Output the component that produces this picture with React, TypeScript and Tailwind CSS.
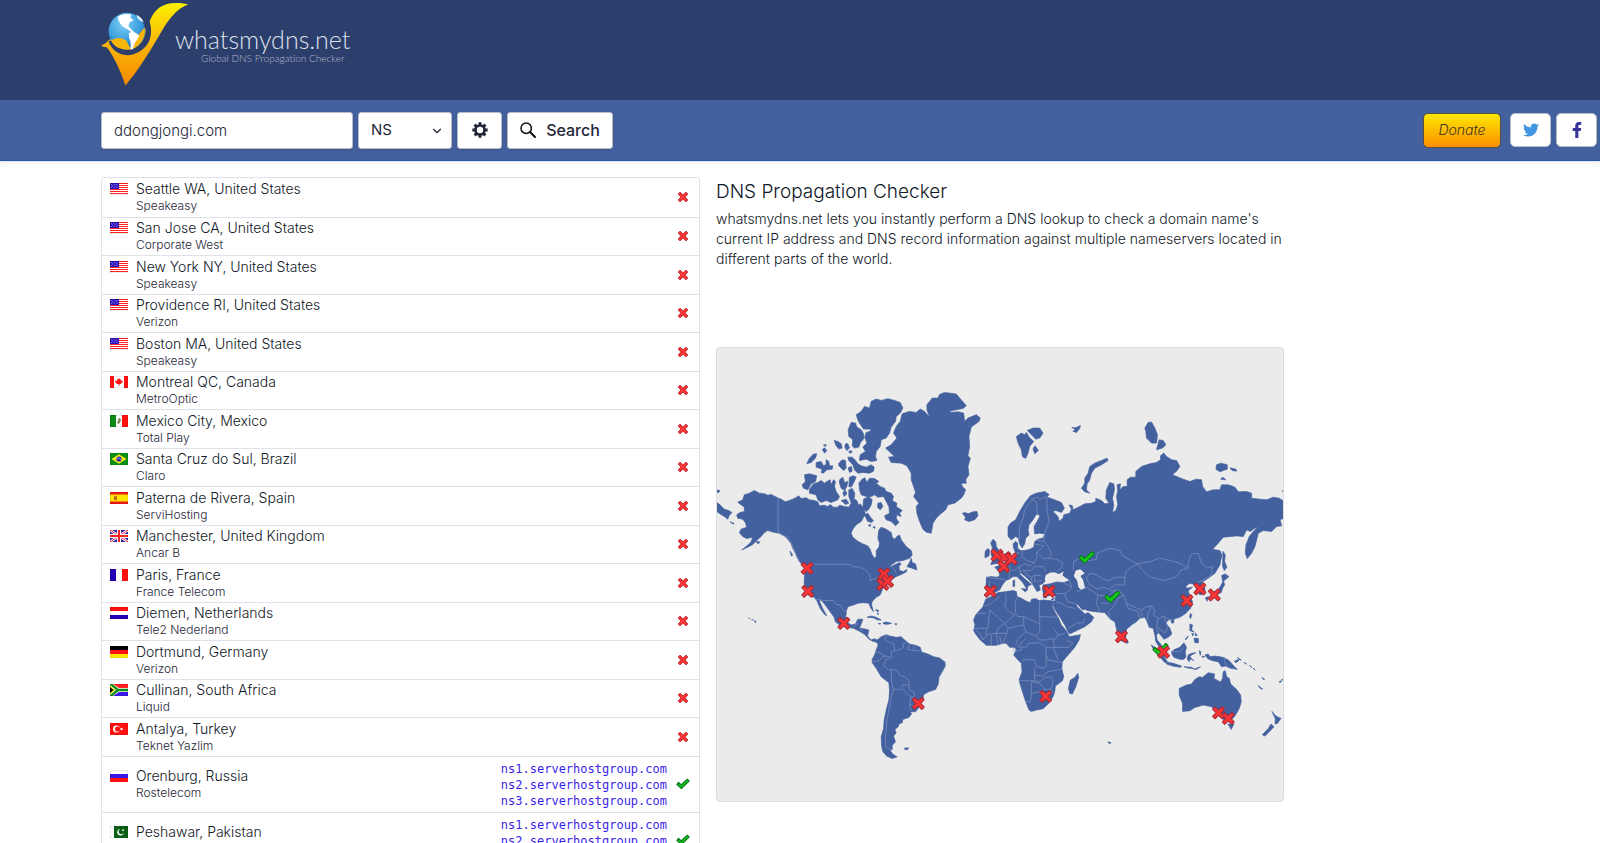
import React from 'react';
import { FaTwitter, FaFacebookF } from 'react-icons/fa';
import { ChevronDown } from 'lucide-react';

type Country =
  | 'us' | 'ca' | 'mx' | 'br' | 'es' | 'gb' | 'fr' | 'nl' | 'de' | 'za' | 'tr' | 'ru' | 'pk';

interface Server {
  country: Country;
  location: string;
  provider: string;
  records?: string[];
}

const NAMESERVERS = [
  'ns1.serverhostgroup.com',
  'ns2.serverhostgroup.com',
  'ns3.serverhostgroup.com',
];

const SERVERS: Server[] = [
  { country: 'us', location: 'Seattle WA, United States', provider: 'Speakeasy' },
  { country: 'us', location: 'San Jose CA, United States', provider: 'Corporate West' },
  { country: 'us', location: 'New York NY, United States', provider: 'Speakeasy' },
  { country: 'us', location: 'Providence RI, United States', provider: 'Verizon' },
  { country: 'us', location: 'Boston MA, United States', provider: 'Speakeasy' },
  { country: 'ca', location: 'Montreal QC, Canada', provider: 'MetroOptic' },
  { country: 'mx', location: 'Mexico City, Mexico', provider: 'Total Play' },
  { country: 'br', location: 'Santa Cruz do Sul, Brazil', provider: 'Claro' },
  { country: 'es', location: 'Paterna de Rivera, Spain', provider: 'ServiHosting' },
  { country: 'gb', location: 'Manchester, United Kingdom', provider: 'Ancar B' },
  { country: 'fr', location: 'Paris, France', provider: 'France Telecom' },
  { country: 'nl', location: 'Diemen, Netherlands', provider: 'Tele2 Nederland' },
  { country: 'de', location: 'Dortmund, Germany', provider: 'Verizon' },
  { country: 'za', location: 'Cullinan, South Africa', provider: 'Liquid' },
  { country: 'tr', location: 'Antalya, Turkey', provider: 'Teknet Yazlim' },
  { country: 'ru', location: 'Orenburg, Russia', provider: 'Rostelecom', records: NAMESERVERS },
  { country: 'pk', location: 'Peshawar, Pakistan', provider: 'PTCL', records: NAMESERVERS },
];

function FlagArt({ country }: { country: Country }) {
  switch (country) {
    case 'us':
      return (
        <>
          <path fill="#fff" d="M0 0h18v12H0z" />
          <path stroke="#f22" strokeWidth="1" d="M0 .5h18M0 2.5h18M0 4.5h18M0 6.5h18M0 8.5h18M0 10.5h18" />
          <path fill="#2a10b8" d="M0 0h9v6H0z" />
          <path stroke="#a9a0ee" strokeWidth=".8" strokeDasharray="1 1.6" d="M1 1.6h7M2 3h6M1 4.4h7" />
        </>
      );
    case 'ca':
      return (
        <>
          <path fill="#fff" d="M0 0h18v12H0z" />
          <path fill="#f11" d="M0 0h4v12H0zM14 0h4v12h-4zM9 2l1 1.6 1-.4-.2 2 1.6-.8.6 1.2-2.4 2.4H9.4V10h-.8V8H7L4.900 5.600l.7-1.200 1.600.8L7 3.200l1 .4z" />
        </>
      );
    case 'mx':
      return (
        <>
          <path fill="#fff" d="M0 0h18v12H0z" />
          <path fill="#0a8a17" d="M0 0h6v12H0z" />
          <path fill="#f11" d="M12 0h6v12h-6z" />
          <path fill="#7d8a5a" d="M8 4l2-1 1 2-1 3-2 1-1-2 1-1z" />
        </>
      );
    case 'br':
      return (
        <>
          <path fill="#0a8f16" d="M0 0h18v12H0z" />
          <path fill="#f7ea18" d="M9 1.200L16.500 6 9 10.800 1.500 6z" />
          <circle cx="9" cy="6" r="2.600" fill="#2a2aa8" />
          <path stroke="#b9c9e9" strokeWidth=".7" fill="none" d="M6.600 5.300c2-.5 3.800.2 4.800 1.600" />
        </>
      );
    case 'es':
      return (
        <>
          <path fill="#f01818" d="M0 0h18v12H0z" />
          <path fill="#ffe600" d="M0 2.500h18v7H0z" />
          <path fill="#c7622a" d="M4 4.500l1.500-1 1.500 1.500v3H4z" />
        </>
      );
    case 'gb':
      return (
        <>
          <path fill="#2b1fb5" d="M0 0h18v12H0z" />
          <path stroke="#fff" strokeWidth="2.600" d="M0 0l18 12M18 0L0 12" />
          <path stroke="#f22" strokeWidth=".9" d="M0 0l18 12M18 0L0 12" />
          <path stroke="#fff" strokeWidth="4" d="M9 0v12M0 6h18" />
          <path stroke="#f22" strokeWidth="2" d="M9 0v12M0 6h18" />
        </>
      );
    case 'fr':
      return (
        <>
          <path fill="#fff" d="M0 0h18v12H0z" />
          <path fill="#2500b4" d="M0 0h6v12H0z" />
          <path fill="#f11" d="M12 0h6v12h-6z" />
        </>
      );
    case 'nl':
      return (
        <>
          <path fill="#fff" d="M0 0h18v12H0z" />
          <path fill="#f11" d="M0 0h18v4H0z" />
          <path fill="#2500b4" d="M0 8h18v4H0z" />
        </>
      );
    case 'de':
      return (
        <>
          <path fill="#000" d="M0 0h18v4H0z" />
          <path fill="#f11" d="M0 4h18v4H0z" />
          <path fill="#ffe600" d="M0 8h18v4H0z" />
        </>
      );
    case 'za':
      return (
        <>
          <path fill="#fff" d="M0 0h18v12H0z" />
          <path fill="#f22" d="M3 0h15v4H9z" />
          <path fill="#3a16e8" d="M9 8h9v4H3z" />
          <path stroke="#0a8f16" strokeWidth="2.400" fill="none" d="M0 -.5L8 6 0 12.500M8 6h10" />
          <path fill="#ffe600" d="M0 1.800L5.200 6 0 10.200z" />
          <path fill="#000" d="M0 3l3.600 3L0 9z" />
        </>
      );
    case 'tr':
      return (
        <>
          <path fill="#f11" d="M0 0h18v12H0z" />
          <circle cx="6.500" cy="6" r="3.400" fill="#fff" />
          <circle cx="7.600" cy="6" r="2.600" fill="#f11" />
          <circle cx="11.500" cy="6" r="1.200" fill="#fff" />
        </>
      );
    case 'ru':
      return (
        <>
          <path fill="#fff" d="M0 0h18v12H0z" />
          <path fill="#3a16e8" d="M0 4h18v4H0z" />
          <path fill="#f11" d="M0 8h18v4H0z" />
        </>
      );
    case 'pk':
      return (
        <>
          <path fill="#fff" d="M0 0h18v12H0z" />
          <path fill="#0a5f16" d="M4 0h14v12H4z" />
          <circle cx="10.500" cy="6.200" r="3.200" fill="#fff" />
          <circle cx="11.400" cy="5.500" r="2.700" fill="#0a5f16" />
          <circle cx="13" cy="4.200" r=".9" fill="#fff" />
        </>
      );
  }
}

function Flag({ country }: { country: Country }) {
  return (
    <svg viewBox="0 0 18 12" className="mt-[3px] h-3 w-[18px] shrink-0" aria-hidden="true">
      <FlagArt country={country} />
      <path fill="none" stroke="#00000022" strokeWidth="1" d="M0 0h18v12H0z" />
    </svg>
  );
}

const CROSS =
  'M-18-11L-11-18 0-8 11-18 18-11 8 0 18 11 11 18 0 8-11 18-18 11-8 0z';
const TICK = 'M-23 1L-16-6-7 3 16-18 23-11-6 17z';

function StatusIcon({ ok }: { ok: boolean }) {
  return ok ? (
    <svg viewBox="-26 -22 52 44" className="ml-auto h-3 w-[14px]" role="img" aria-label="Resolved">
      <path d={TICK} fill="#12b81c" stroke="#0b7a1c" strokeWidth="4" strokeLinejoin="round" />
    </svg>
  ) : (
    <svg viewBox="-22 -22 44 44" className="mr-px ml-auto size-3" role="img" aria-label="Not resolved">
      <path d={CROSS} fill="#f83434" stroke="#b8303a" strokeWidth="3" strokeLinejoin="round" />
    </svg>
  );
}

/* Land outlines, grouped by the quadrant whose origin they are drawn from. */
const NORTH_WEST = [
  'M85,487 100,480 105,465 120,460 135,452 150,460 165,462 175,466 185,464 205,474 215,478 228,486 240,482 250,478 262,472 268,468 275,476 290,474 300,480 315,482 325,486 330,498 345,496 355,500 362,494 372,502 385,502 390,496 405,500 418,502 425,490 424,482 432,478 438,478 444,486 446,496 452,492 458,500 465,512 468,525 462,532 455,545 440,555 430,568 425,580 430,592 445,604 460,612 475,618 482,628 488,645 495,655 500,650 500,632 508,622 510,610 505,595 506,585 508,570 515,562 530,568 545,578 548,592 555,598 562,590 570,585 575,600 590,620 605,632 608,645 600,655 580,662 560,665 545,675 540,682 552,676 570,668 575,672 568,680 570,692 582,695 592,688 590,696 575,704 560,710 548,718 540,725 530,735 520,745 515,758 512,765 500,772 488,785 486,795 492,815 484,805 478,790 462,788 445,790 430,796 415,800 411,812 409,830 415,848 425,855 438,852 445,838 460,838 455,852 450,864 462,866 478,870 474,888 484,900 495,896 506,902 498,906 488,903 478,897 465,883 450,874 432,865 415,862 395,858 378,846 374,832 362,815 345,792 334,780 330,784 340,806 352,828 344,822 332,805 322,782 314,772 298,766 288,745 284,728 286,700 288,680 272,668 265,655 258,640 250,625 244,610 235,598 225,588 210,580 195,578 175,572 165,578 155,590 142,602 130,614 115,622 97,630 110,620 125,606 130,592 112,596 100,590 90,578 95,568 112,562 108,548 100,538 85,535 82,525 92,518 105,515 105,502 95,495Z',
  'M22,488 32,495 45,508 58,512 68,518 60,526 55,538 45,530 35,524 22,515Z',
  'M22,450 32,453 28,458 22,457Z',
  'M62,546 74,550 72,553Z',
  'M285,405 300,402 322,408 318,425 305,432 295,450 282,445 278,435 288,425Z',
  'M300,448 312,432 325,428 335,422 345,430 352,425 362,420 365,435 372,420 378,425 375,440 380,455 390,470 385,480 365,488 350,482 335,488 325,480 320,465 300,460Z',
  'M292,372 300,355 312,343 322,342 318,355 305,368Z',
  'M320,368 335,365 342,378 350,374 350,360 358,365 360,378 370,378 368,388 352,390 342,400 335,398 338,388 320,382Z',
  'M338,330 345,324 352,332 346,340Z',
  'M342,316 350,314 348,320Z',
  'M374,302 385,305 395,312 398,325 388,328 380,318Z',
  'M408,312 415,312 420,325 412,332 406,322Z',
  'M418,335 425,332 428,338 420,340Z',
  'M388,370 398,360 408,362 410,385 402,392 395,385 388,378Z',
  'M416,384 426,380 428,394 420,398Z',
  'M415,352 428,352 438,362 445,372 455,378 470,382 485,375 494,382 492,394 480,400 460,398 445,400 435,390 430,375 418,362Z',
  'M425,248 438,250 442,262 455,270 462,282 464,295 452,310 448,322 435,325 428,318 430,300 418,290 416,270Z',
  'M440,225 455,215 465,200 480,205 485,185 500,178 515,182 535,177 555,182 572,188 580,205 572,220 560,230 558,245 545,262 540,280 530,295 515,300 512,320 500,335 498,350 502,362 485,365 470,358 450,362 452,345 468,335 460,322 472,310 466,292 470,278 484,274 482,268 462,268 450,250 445,240Z',
  'M390,420 400,412 405,428 415,425 412,440 405,452 395,445 390,430Z',
  'M420,412 432,408 440,412 432,430 425,442 418,440Z',
  'M418,450 428,446 436,460 434,475 424,486 418,470Z',
  'M400,458 408,452 412,462 404,470Z',
  'M395,482 410,478 418,490 408,494Z',
  'M448,430 458,418 466,414 472,428 480,415 495,416 508,425 500,430 512,440 525,445 530,455 545,460 552,470 548,482 562,490 560,500 578,512 570,520 575,530 562,525 560,535 568,548 558,558 545,545 530,540 525,528 540,520 538,500 530,485 522,470 505,472 495,465 485,470 470,470 455,465 450,450Z',
  'M462,478 478,470 488,480 485,495 478,508 470,515 460,505Z',
  'M505,490 515,488 520,500 512,510 504,502Z',
  'M465,525 475,520 485,535 492,542 486,548 474,544Z',
  'M476,556 484,554 482,560Z M490,562 496,560 496,566Z',
  'M592,680 600,668 605,655 608,668 618,672 622,690 605,684Z',
  'M262,650 275,660 284,670 270,664Z',
  'M242,634 250,645 246,649Z',
  'M140,605 152,606 146,612Z',
  'M652,195 668,175 685,175 690,164 705,158 740,163 770,198 760,206 740,210 722,214 722,218 745,216 762,220 765,245 775,235 800,225 812,235 808,245 785,262 778,290 780,320 775,348 782,355 775,380 778,405 768,420 770,430 755,430 758,440 768,450 762,465 755,475 735,490 715,495 708,510 690,525 680,535 670,550 665,580 650,577 640,568 630,545 622,520 620,500 628,490 612,470 618,458 612,440 605,420 605,400 592,378 575,370 545,368 537,352 555,350 528,325 545,315 562,295 552,280 560,260 572,245 578,222 600,215 620,218 632,208 645,215 660,232 652,210Z',
  'M758,520 768,518 775,522 790,516 802,515 805,528 795,540 778,545 765,540 768,532Z',
];

const SOUTH_WEST = [
  'M498,242 506,238 515,230 530,224 540,228 560,232 575,230 585,240 600,252 618,256 632,262 636,276 655,282 672,290 690,294 706,306 707,318 695,340 688,352 686,372 678,388 655,396 642,404 640,420 628,442 618,455 602,455 606,462 598,472 580,478 578,488 568,492 566,500 556,508 560,518 552,528 556,540 558,545 548,556 548,568 542,572 552,584 563,590 548,595 532,588 520,575 516,555 515,530 522,505 524,480 530,450 538,420 540,390 538,368 515,350 500,325 488,308 488,298 495,285 500,270 506,255Z',
  'M584,564 597,563 594,569 586,568Z',
  'M472,172 485,168 500,172 515,180 505,180 490,173Z',
  'M521,188 530,186 546,190 535,193 522,192Z',
  'M506,190 514,191 510,193Z M556,191 562,191 561,194 556,193Z',
  'M498,150 504,149 508,153 504,155Z M504,158 508,162 505,164Z',
  'M118,174 121,174 120,176Z M127,178 131,179 129,181Z M135,182 140,184 138,188Z',
];

const NORTH_EAST = [
  'M-10,712 5,710 22,712 30,708 28,695 15,682 30,676 45,668 60,660 70,652 78,640 72,625 70,612 78,604 84,610 84,625 92,632 105,632 120,628 132,622 135,605 145,598 160,594 165,582 150,580 135,582 133,560 142,545 150,530 145,522 138,526 130,540 118,555 115,570 118,585 108,595 105,612 97,624 90,612 86,595 78,590 65,600 55,590 55,562 62,550 78,540 90,515 105,490 122,468 140,460 165,455 178,464 172,472 190,478 215,488 224,505 215,518 198,512 190,515 205,530 208,544 220,535 222,525 240,520 245,508 238,495 248,498 250,510 270,500 285,492 305,490 318,485 318,475 335,482 345,492 358,490 348,475 350,450 360,428 372,432 374,450 368,475 372,495 368,518 378,512 384,495 380,470 384,452 382,435 392,432 390,450 400,440 412,440 412,420 422,412 438,412 438,395 455,380 480,372 500,368 512,360 512,348 522,340 530,350 545,360 560,362 570,380 562,392 548,405 565,412 580,418 600,425 618,418 635,420 638,440 650,456 670,450 690,450 695,435 715,435 735,442 745,456 770,455 785,460 785,475 810,478 830,480 850,472 868,475 882,485 882,535 870,540 875,558 860,560 845,575 820,572 805,580 800,600 795,620 785,640 772,656 766,640 768,615 778,590 790,575 805,560 790,568 782,575 770,570 760,590 740,588 700,592 685,610 668,628 690,632 696,645 690,675 675,700 655,715 640,724 636,730 645,745 645,760 630,765 620,750 618,735 600,730 588,738 590,745 608,742 595,752 600,770 608,785 602,805 588,820 570,832 550,838 535,840 528,850 540,865 546,882 535,892 522,898 515,888 505,878 500,885 502,900 512,912 520,925 518,932 508,920 498,905 495,885 490,865 478,862 472,845 465,832 450,835 440,845 425,855 410,868 408,890 400,905 392,900 382,875 375,845 362,838 345,818 315,815 295,812 285,808 278,810 268,798 258,788 262,800 275,812 285,822 295,818 312,832 305,845 285,860 260,872 240,882 235,875 225,855 210,830 195,808 190,795 196,782 198,768 190,762 175,768 162,765 158,748 160,735 180,732 200,726 222,728 240,722 232,715 215,708 222,695 210,702 195,698 180,700 170,710 165,725 158,732 148,735 152,750 142,755 132,738 120,722 105,708 92,698 90,702 100,712 115,725 125,734 115,738 112,752 108,742 98,726 82,710 70,710 58,718 48,722 38,735 30,750 15,758 0,760 -12,750 -10,725Z',
  'M10,598 18,605 20,620 30,635 38,650 45,662 25,670 3,674 10,658 4,642 8,622 3,610Z',
  'M-12,632 -4,626 0,632 -2,648 -14,654 -14,640Z',
  'M80,290 95,280 105,285 110,278 118,292 132,305 120,320 115,340 108,356 98,350 95,330 85,310Z',
  'M113,272 130,265 150,265 160,280 150,295 138,298 125,285Z',
  'M130,327 136,318 146,332 135,342Z',
  'M246,263 258,264 272,257 270,266 260,278 250,275 256,268Z',
  'M275,445 285,430 285,415 295,400 300,380 315,370 335,362 352,355 355,362 335,375 315,385 305,400 300,420 292,432 290,450 300,460 285,456Z',
  'M465,265 475,248 485,247 495,265 503,285 500,310 485,310 470,295 468,275Z',
  'M500,330 508,300 520,302 528,315 518,325Z',
  'M680,375 692,370 712,375 712,388 700,392 690,396 678,388Z',
  'M720,384 738,388 740,394 726,392Z',
  'M692,418 698,412 708,420Z',
  'M876,454 882,450 882,458Z',
  'M699,634 706,645 704,665 711,682 703,692 698,680Z',
  'M695,707 705,702 717,710 708,718 698,724Z',
  'M701,722 704,735 698,745 694,758 680,764 662,768 668,758 684,750 692,738Z',
  'M646,774 656,770 652,784Z',
  'M70,722 75,720 75,740 70,740Z M95,746 112,748 107,756Z M160,770 172,772 162,774Z M184,778 196,774 190,780Z',
];

const SOUTH_EAST = [
  'M-12,118 -20,140 -42,165 -48,180 -44,195 -48,212 -40,225 -28,240 -10,256 20,256 40,250 50,250 60,262 75,262 80,270 72,285 85,300 95,310 97,335 88,360 92,375 100,400 108,425 118,450 125,454 140,450 160,446 175,432 190,410 195,395 197,378 218,362 222,350 216,325 218,305 235,285 255,262 268,240 272,224 250,228 238,230 232,215 215,195 205,172 195,155 188,140 190,128 198,124 180,122 160,120 148,122 138,116 125,118 122,128 110,124 95,115 82,110 80,95 70,92 50,95 25,98 10,108 0,112Z',
  'M264,340 267,352 258,380 248,402 240,400 236,385 242,360 255,352Z',
  'M602,160 606,164 602,176 599,170Z',
  'M600,192 608,195 605,210 613,216 600,212Z M612,235 625,235 626,248 615,248Z M606,220 612,222 608,228Z M616,218 622,226 617,228Z M586,238 595,228 590,238Z',
  'M543,182 552,178 552,188 546,190Z',
  'M408,238 415,243 414,250 408,248Z',
  'M484,255 495,262 510,275 525,292 532,305 525,308 510,290 495,275Z',
  'M530,306 550,310 575,318 572,322 548,318 530,312Z',
  'M545,275 555,268 570,262 582,248 590,262 586,275 588,290 582,298 570,298 552,292 546,282Z',
  'M595,285 605,280 618,278 605,285 600,290 612,302 602,296 598,305 592,297Z',
  'M582,320 605,322 612,326 595,324Z M612,328 632,320 620,328Z',
  'M628,272 633,275 631,286Z M636,288 645,290 638,292Z',
  'M645,285 655,282 660,290 675,288 700,292 718,302 735,322 742,328 722,325 708,318 695,320 685,305 668,302 655,297Z',
  'M733,304 746,298 746,302 738,308Z M742,292 754,300 750,300Z M762,306 770,312 765,310Z M778,316 786,322 782,320Z M790,324 796,330 792,328Z',
  'M568,385 590,375 605,372 615,358 628,350 638,352 655,338 674,342 672,355 692,366 698,355 700,335 706,332 710,350 718,355 722,372 740,388 752,405 754,425 748,445 735,468 722,482 700,478 688,468 680,455 665,440 640,435 615,442 600,452 578,454 578,430 568,405Z',
  'M714,492 732,492 724,508Z',
  'M846,454 858,468 873,475 862,490 855,492 856,476Z',
  'M843,492 852,500 835,518 825,528 817,524 835,505Z',
  'M355,545 364,548 358,551Z',
  'M804,376 818,387 812,386Z M816,352 824,358 820,358Z M868,364 875,362 870,368Z M874,360 882,356 878,360Z',
];

const INLAND_WATER = [
  'M258,692 272,688 285,700 272,708 280,720 286,745 275,750 266,742 262,722 252,708Z',
  'M168,705 182,698 196,698 206,704 222,694 218,706 230,716 222,724 200,722 180,724 165,720Z',
];

/* Country borders in the same quadrant coordinates. */
const BORDERS_NW =
  'M206,474 206,578 218,586 232,590 244,606 258,640 270,664 M312,673 420,673 430,680 450,682 468,690 482,704 482,722 500,714 512,708 M545,678 556,690 560,700 M322,778 345,782 372,782 380,794 392,794 400,808 411,816 M432,862 440,852 446,852 M450,868 462,872';
const BORDERS_SW =
  'M530,226 526,240 540,248 552,250 556,272 544,276 548,292 530,298 522,315 535,330 548,328 M556,272 572,268 582,262 580,250 590,248 M598,254 596,268 614,272 632,272 M614,258 612,272 M498,275 515,280 524,288 510,300 498,304 490,306 M524,288 540,290 M545,330 546,365 552,388 M548,328 562,332 570,345 585,350 598,362 598,376 580,374 575,388 552,388 545,410 540,440 532,480 528,530 528,560 545,570 M598,376 600,390 612,395 616,410 604,412 580,388 M604,412 600,440 606,450 M600,432 618,440';
const BORDERS_NE =
  'M88,600 90,560 100,535 105,510 118,490 130,480 140,485 143,525 M122,478 145,472 150,480 168,470 172,480 172,510 178,545 165,580 M165,580 162,605 175,620 185,640 178,655 200,658 220,668 215,685 200,695 M140,600 160,605 M136,612 162,618 M100,632 96,650 110,662 135,668 142,650 140,635 160,655 178,655 M160,620 145,635 M135,668 120,678 105,672 90,680 75,690 62,692 60,678 M60,692 58,715 M-8,712 22,716 45,718 M0,722 0,748 M90,680 88,695 105,692 125,692 135,680 160,680 168,695 M105,692 112,705 125,712 135,705 155,708 M125,712 128,735 M135,705 135,725 155,722 M75,640 92,640 M250,690 252,665 270,655 300,662 320,658 322,640 360,625 390,632 400,648 420,660 443,672 425,682 408,695 405,712 375,712 355,722 340,718 322,705 300,700 290,715 300,735 325,748 340,742 358,748 375,735 405,735 405,712 M443,672 480,665 510,655 540,662 570,670 595,685 575,690 560,710 525,722 480,712 462,695 443,672 M595,685 595,665 605,642 625,640 635,670 650,685 668,678 665,705 640,720 M222,728 245,742 240,722 M198,760 225,762 240,750 245,742 M290,742 325,765 320,792 330,815 M290,742 262,755 M325,765 352,770 370,755 395,760 M332,790 355,790 370,780 M225,762 232,785 255,790 M198,785 215,790 230,800 255,805 M362,835 355,815 372,800 385,775 402,765 385,750 360,752 M402,765 410,790 430,800 455,810 470,800 485,798 495,812 490,825 505,835 520,828 540,840 M410,790 415,805 445,815 450,835 M455,810 458,830 M485,798 475,820 472,840 M505,835 500,860 505,878 M520,828 535,860 525,880 512,870 505,860 M235,865 260,850 280,848 285,835 M620,728 640,720';
const BORDERS_SE =
  'M-40,160 -10,160 M-15,140 5,130 30,110 M0,150 -5,205 -45,205 M0,150 45,190 25,205 20,220 M48,98 50,120 45,135 50,150 75,165 M82,112 76,130 78,160 85,170 102,170 150,192 M75,165 45,190 55,205 102,195 102,170 M150,122 148,170 205,172 M150,170 150,215 140,228 148,240 170,240 190,235 M55,205 50,225 40,248 M102,195 108,215 85,235 78,255 M20,220 25,256 M5,225 5,256 M-10,228 0,222 20,220 50,220 M-45,205 -30,220 -20,240 -10,228 -10,205 M30,228 35,252 M108,215 140,228 M108,235 85,260 110,262 115,250 150,248 170,262 168,285 170,320 160,325 140,318 135,300 115,298 95,302 M170,262 190,262 205,262 235,262 250,250 M190,262 205,300 M190,205 205,225 195,240 M190,235 195,262 M205,225 225,220 M250,250 230,240 M170,285 175,300 218,308 M135,320 135,362 88,362 M135,345 160,348 175,335 200,330 218,328 M135,362 150,365 165,352 185,350 190,370 182,388 165,388 150,370 125,365 125,400 122,425 108,425 M125,400 150,395 165,388 M182,388 190,400 M70,262 75,275 95,270 98,262 M545,275 570,275 582,262 M702,292 708,318';

const FAILED: [number, number][] = [
  [293, 685], [295, 754], [523, 702], [520, 733], [534, 724], [403, 850], [626, 1090],
  [842, 754], [862, 646], [885, 653], [882, 680], [905, 657], [1018, 754], [1470, 747],
  [1431, 782], [1513, 765], [1235, 890], [1361, 936], [1008, 1069], [1526, 1118], [1555, 1135],
];
const RESOLVED: [number, number][] = [[1131, 653], [1208, 771], [1352, 928]];

function WorldMap() {
  return (
    <svg viewBox="20 22 1702 1364" className="block w-full" role="img" aria-label="World map of DNS results">
      <g fill="#43609f" stroke="#43609f" strokeWidth="2" strokeLinejoin="round">
        <path d={NORTH_WEST.join(' ')} />
        <path d={SOUTH_WEST.join(' ')} transform="translate(0 660)" />
        <path d={NORTH_EAST.join(' ')} transform="translate(840 0)" />
        <path d={SOUTH_EAST.join(' ')} transform="translate(840 660)" />
      </g>
      <path d={INLAND_WATER.join(' ')} transform="translate(840 0)" fill="#ebebeb" />
      <g fill="none" stroke="#8497c2" strokeWidth="2" strokeLinejoin="round">
        <path d={BORDERS_NW} />
        <path d={BORDERS_SW} transform="translate(0 660)" />
        <path d={BORDERS_NE} transform="translate(840 0)" />
        <path d={BORDERS_SE} transform="translate(840 660)" />
      </g>
      <g fill="#10d010" stroke="#0b7a1c" strokeWidth="3" strokeLinejoin="round">
        {RESOLVED.map(([x, y]) => (
          <path key={`${x}-${y}`} d={TICK} transform={`translate(${x} ${y})`} />
        ))}
      </g>
      <g fill="#fb3535" stroke="#a32a38" strokeWidth="3" strokeLinejoin="round">
        {FAILED.map(([x, y]) => (
          <path key={`${x}-${y}`} d={CROSS} transform={`translate(${x} ${y})`} />
        ))}
      </g>
    </svg>
  );
}

function LogoMark() {
  return (
    <svg viewBox="0 0 270 260" className="h-[87px] w-[90px]" aria-hidden="true">
      <defs>
        <linearGradient id="tick" x1="0" y1="0" x2="0" y2="1">
          <stop offset="0" stopColor="#fbf000" />
          <stop offset="0.5" stopColor="#f9b50a" />
          <stop offset="1" stopColor="#f88a00" />
        </linearGradient>
        <radialGradient id="globe" cx="0.4" cy="0.3" r="0.75">
          <stop offset="0" stopColor="#7fd0f7" />
          <stop offset="0.6" stopColor="#3c9fdf" />
          <stop offset="1" stopColor="#1a62b4" />
        </radialGradient>
      </defs>
      <path
        fill="url(#tick)"
        d="M0 137L17 127C22 117 40 110 70 114C90 122 105 120 138 82L148 58C166 18 196 0 262 12C222 28 200 62 175 105C140 165 108 215 73 256C62 220 40 170 18 142L8 140Z"
      />
      <path fill="#2c3e6b" d="M22 122C40 176 104 178 138 134C154 112 154 78 140 48L128 58C140 90 134 118 112 136C84 158 46 148 32 122Z" />
      <circle cx="78" cy="93" r="55" fill="url(#globe)" />
      <path fill="#f9b50a" d="M30 122C45 110 62 112 76 122L90 147C68 152 42 144 30 122ZM92 147C98 120 115 100 131 82C136 110 118 140 92 147Z" />
      <path fill="#fff" d="M50 50C62 40 80 40 92 44L88 52 98 60 86 66 82 78 92 88 100 96 92 96 74 84C62 80 56 66 52 60ZM84 98C94 92 106 96 114 106C112 118 100 124 96 147L88 148C90 134 90 124 84 112Z" />
      <path fill="#e8f4fc" d="M106 44C116 48 124 56 128 66L118 62 110 54Z" />
    </svg>
  );
}

function GearIcon() {
  return (
    <svg viewBox="-12 -12 24 24" className="size-4" fill="none" stroke="currentColor" aria-hidden="true">
      <circle r="6.800" strokeWidth="4" />
      <path
        strokeWidth="4.500"
        d="M0-11.500V-7M0 11.500V7M-11.500 0H-7M11.500 0H7M-8.100-8.100l3.200 3.200M8.100 8.100l-3.200-3.200M-8.100 8.100l3.200-3.200M8.100-8.100l-3.200 3.200"
      />
    </svg>
  );
}

function SearchIcon() {
  return (
    <svg viewBox="0 0 16 16" className="size-4" fill="none" stroke="#111" aria-hidden="true">
      <circle cx="6.200" cy="6.200" r="5.200" strokeWidth="1.500" />
      <path strokeWidth="2" strokeLinecap="round" d="M10.300 10.300L15 15" />
    </svg>
  );
}

const BOX =
  'h-[37px] rounded-[3px] border border-[#b9bdc9] bg-white text-[#1f2638] shadow-sm';

export default function App() {
  return (
    <div className="h-screen overflow-hidden bg-white font-['Inter',sans-serif] text-[#1f2638]">
      <header>
        <div className="h-[100px] bg-[#2c3e6b] pl-[101px]">
          <a href="/" className="flex w-fit">
            <LogoMark />
            <span className="-ml-4 flex flex-col items-end pt-[25px] font-['Lato',sans-serif] font-light">
              <span className="text-[25px] leading-[28px] text-[#dde1ec]">whatsmydns.net</span>
              <span className="pr-[6px] text-[10px] leading-[10px] text-[#b4bcd3]">Global DNS Propagation Checker</span>
            </span>
          </a>
        </div>
        <div className="flex h-[61px] items-center justify-between border-b border-[#2457a5] bg-[#43609f] pr-[3px] pl-[101px] shadow">
          <form className="flex gap-[5px]" onSubmit={(e) => e.preventDefault()}>
            <input
              type="text"
              aria-label="Domain name"
              defaultValue="ddongjongi.com"
              className={`${BOX} w-[252px] px-3 text-[15px] font-light`}
            />
            <div className="relative">
              <select aria-label="Record type" defaultValue="NS" className={`${BOX} w-[94px] appearance-none px-3 text-[15px]`}>
                <option>A</option>
                <option>MX</option>
                <option>NS</option>
                <option>TXT</option>
              </select>
              <ChevronDown className="pointer-events-none absolute top-3 right-2 size-[14px]" aria-hidden="true" />
            </div>
            <button type="button" aria-label="Settings" className={`${BOX} flex w-[45px] items-center justify-center`}>
              <GearIcon />
            </button>
            <button type="submit" className={`${BOX} flex w-[106px] items-center justify-center gap-[10px] font-medium`}>
              <SearchIcon />
              Search
            </button>
          </form>
          <div className="flex items-center gap-[5px]">
            <a
              href="#donate"
              className="mr-1 flex h-[35px] w-[78px] items-center justify-center rounded-[5px] border border-[#5c4f3c] bg-linear-to-b from-[#fbe600] to-[#fb8f00] text-sm font-light text-[#3b3420] italic"
            >
              Donate
            </a>
            <a
              href="#twitter"
              aria-label="Twitter"
              className="flex h-[34px] w-[41px] items-center justify-center rounded-[5px] border border-[#b9bdc9] bg-white text-[#4296e2]"
            >
              <FaTwitter className="size-4" />
            </a>
            <a
              href="#facebook"
              aria-label="Facebook"
              className="flex h-[34px] w-[41px] items-center justify-center rounded-[5px] border border-[#b9bdc9] bg-white text-[#34349a]"
            >
              <FaFacebookF className="size-4" />
            </a>
          </div>
        </div>
      </header>

      <main className="grid max-w-[1284px] grid-cols-[599fr_568fr] items-start gap-4 pt-4 pl-[101px]">
        <div className="min-w-0 overflow-hidden rounded-[3px] border border-[#dfe2ea]">
          <table className="w-full border-collapse text-left">
            <tbody>
              {SERVERS.map((s) => (
                <tr key={s.location} className="h-[39px] border-b border-[#dfe2ea] even:h-[38px]">
                  <th scope="row" className="pt-0 pb-px pl-2 font-light">
                    <div className="flex gap-2">
                      <Flag country={s.country} />
                      <div>
                        <div className="text-sm leading-[18px] text-[#111827]">{s.location}</div>
                        <div className="text-xs leading-[15px] text-[#1f2638]">{s.provider}</div>
                      </div>
                    </div>
                  </th>
                  <td className="p-0 text-right font-['DejaVu_Sans_Mono',monospace] text-xs leading-4 text-[#3c1fe8]">
                    {s.records && (
                      <ul className="pt-1 pb-[3px]">
                        {s.records.map((r) => (
                          <li key={r}>{r}</li>
                        ))}
                      </ul>
                    )}
                  </td>
                  <td className="w-8 py-0 pr-[9px]">
                    <StatusIcon ok={Boolean(s.records)} />
                  </td>
                </tr>
              ))}
            </tbody>
          </table>
        </div>

        <section className="min-w-0">
          <h1 className="pt-px text-[19px] leading-7 font-light text-[#111827]">DNS Propagation Checker</h1>
          <p className="mt-[3px] text-sm leading-5 font-light text-[#111827]">
            whatsmydns.net lets you instantly perform a DNS lookup to check a domain name's current IP
            address and DNS record information against multiple nameservers located in different parts of
            the world.
          </p>
          <div className="mt-[78px] overflow-hidden rounded-[4px] bg-[#ebebeb] outline-1 -outline-offset-1 outline-[#dcdddf]">
            <WorldMap />
          </div>
        </section>
      </main>
    </div>
  );
}
